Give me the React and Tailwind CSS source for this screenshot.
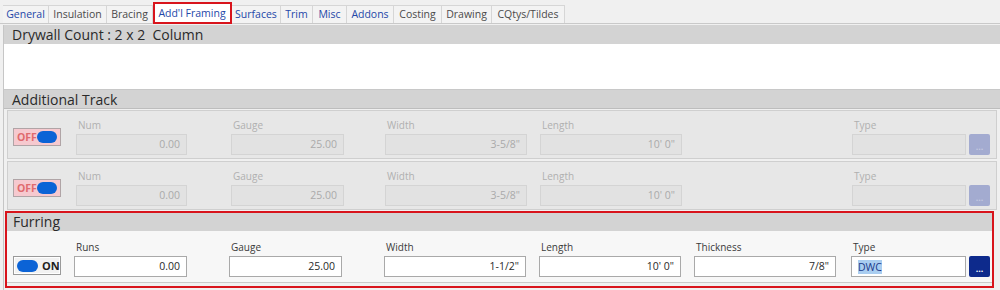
import React from "react";

const tabs = [
  { name: "General", w: "w-[46px]", blue: true },
  { name: "Insulation", w: "w-[58px]", blue: false },
  { name: "Bracing", w: "w-[46px]", blue: false },
  { name: "Add'l Framing", w: "w-[77px]", blue: true, active: true },
  { name: "Surfaces", w: "w-[49px]", blue: true },
  { name: "Trim", w: "w-[32px]", blue: true },
  { name: "Misc", w: "w-[34px]", blue: true },
  { name: "Addons", w: "w-[47px]", blue: true },
  { name: "Costing", w: "w-[48px]", blue: false },
  { name: "Drawing", w: "w-[50px]", blue: false },
  { name: "CQtys/Tildes", w: "w-[73px]", blue: false },
];

const Toggle = ({ on }) => {
  if (on) {
    return (
      <div className="w-[48px] h-[19px] border border-[#9a9a9a] bg-[#f2f2f2] flex items-center pl-[3px] gap-[4px] shadow-[inset_0_0_0_1px_#ffffff]">
        <div className="w-[21px] h-[12px] rounded-full bg-[#0b63d6]" />
        <span className="text-[11px] font-bold text-[#1e1e1e] leading-none">ON</span>
      </div>
    );
  }
  return (
    <div className="w-[48px] h-[18px] border border-[#b0a4a6] bg-[#f6c9cf] flex items-center justify-between pl-[3px] pr-[3px]">
      <span className="text-[10.5px] font-bold text-[#e06a6e] leading-none">OFF</span>
      <div className="w-[21px] h-[12px] rounded-full bg-[#0b63d6]" />
    </div>
  );
};

const Field = ({ label, value, w, ml, on, align = "right", selected }) => (
  <div className={`${w} ${ml} flex flex-col`}>
    <span className={`text-[10px] leading-[14px] pl-[2px] mb-[2px] ${on ? "text-[#3a3a3a]" : "text-[#b0b0b0]"}`}>
      {label}
    </span>
    <div
      className={`h-[21px] flex items-center px-[6px] text-[10.5px] ${
        align === "right" ? "justify-end" : "justify-start"
      } ${
        on
          ? "bg-white border border-[#a9a9a9] text-[#2a2a2a]"
          : "bg-[#e2e2e2] border border-[#d4d4d4] text-[#aaaaaa]"
      }`}
    >
      {selected ? (
        <span className="bg-[#a9cdf0] text-[#1b3a8a] leading-[14px]">{value}</span>
      ) : (
        value
      )}
    </div>
  </div>
);

const DotsButton = ({ on }) => (
  <div
    className={`w-[21px] h-[21px] ml-[3px] rounded-[2px] flex items-end justify-center pb-[4px] text-[9px] leading-none font-bold ${
      on ? "bg-[#0d2a8c] text-white" : "bg-[#a3abd0] text-[#c3c8e0]"
    }`}
  >
    ...
  </div>
);

const TrackRow = () => (
  <div className="mx-[3px] h-[49px] border border-[#cfcfcf] bg-[#e7e7e7] flex items-end pb-[3px] pl-[5px]">
    <div className="mb-[9px]">
      <Toggle />
    </div>
    <Field label="Num" value="0.00" w="w-[111px]" ml="ml-[15px]" />
    <Field label="Gauge" value="25.00" w="w-[113px]" ml="ml-[44px]" />
    <Field label="Width" value={'3-5/8"'} w="w-[142px]" ml="ml-[41px]" />
    <Field label="Length" value={"10' 0\""} w="w-[142px]" ml="ml-[13px]" />
    <Field label="Type" value="" w="w-[114px]" ml="ml-[170px]" />
    <DotsButton />
  </div>
);

export default function App() {
  return (
    <div
      className="w-[1000px] h-[290px] overflow-hidden bg-[#f0f0f0] text-[#222]"
      style={{ fontFamily: '"Open Sans", "Noto Sans", sans-serif' }}
    >
      {/* tab strip */}
      <div className="h-[24px] flex items-end pl-[3px] border-b border-[#c9c9c9]">
        {tabs.map((t) => (
          <div
            key={t.name}
            className={`${t.w} h-[18px] flex items-center justify-center text-[10.5px] leading-none border-r border-[#cfcfcf] ${
              t.blue ? "text-[#2447a8]" : "text-[#4a4a4a]"
            } ${
              t.active
                ? "bg-white outline-2 outline-[#d8141c] -outline-offset-1 h-[20px] mx-[1px]"
                : "bg-[#f3f3f3] border-t border-[#d6d6d6]"
            }`}
          >
            {t.name}
          </div>
        ))}
      </div>

      {/* panel */}
      <div className="ml-[3px] border-l border-[#c6c6c6] h-[266px]">
        <div className="mt-[1px] h-[19px] bg-[#d3d3d3] pl-[8px] text-[14px] leading-[19px] text-[#2a2a2a]">
          Drywall Count : 2 x 2&nbsp;&nbsp;Column
        </div>
        <div className="h-[46px] bg-white border-b border-[#c8c8c8]" />

        <div className="h-[19px] bg-[#d3d3d3] pl-[8px] text-[14px] leading-[19px] text-[#2a2a2a] border-b border-[#bdbdbd]">
          Additional Track
        </div>
        <div className="pt-[1px] flex flex-col gap-[2px]">
          <TrackRow />
          <TrackRow />
        </div>

        {/* furring */}
        <div className="mt-[1px] ml-[1px] w-[989px] h-[77px] border-2 border-[#d8141c] bg-[#f0f0f0]">
          <div className="h-[18px] bg-[#d3d3d3] pl-[6px] text-[14px] leading-[18px] text-[#2a2a2a]">
            Furring
          </div>
          <div className="h-[52px] border-b border-[#c9c9c9] bg-[#f7f7f7] flex items-end pb-[5px] pl-[6px]">
            <div className="mb-[2px]">
              <Toggle on />
            </div>
            <Field label="Runs" value="0.00" w="w-[113px]" ml="ml-[13px]" on />
            <Field label="Gauge" value="25.00" w="w-[113px]" ml="ml-[42px]" on />
            <Field label="Width" value={'1-1/2"'} w="w-[142px]" ml="ml-[42px]" on />
            <Field label="Length" value={"10' 0\""} w="w-[142px]" ml="ml-[13px]" on />
            <Field label="Thickness" value={'7/8"'} w="w-[142px]" ml="ml-[13px]" on />
            <Field label="Type" value="DWC" w="w-[115px]" ml="ml-[15px]" on align="left" selected />
            <DotsButton on />
          </div>
        </div>
      </div>
    </div>
  );
}
